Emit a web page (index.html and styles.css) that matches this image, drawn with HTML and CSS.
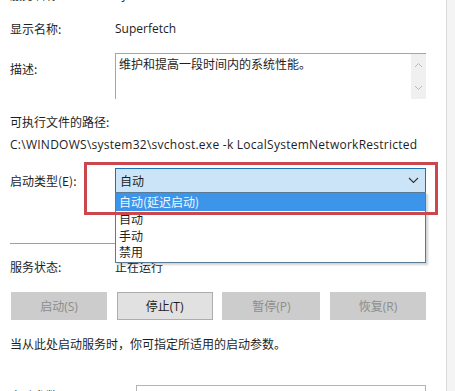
FILE: index.html
```html
<!DOCTYPE html>
<html lang="zh-CN">

<head>
    <meta charset="UTF-8">
    <title>Superfetch 的属性</title>
    <link rel="stylesheet" href="styles.css">
</head>

<body>
    <div class="page">
        <div class="dlg">
            <div class="row first">
                <div class="lbl">服务名称:</div>
                <div class="val">SysMain</div>
            </div>
            <div class="row name">
                <div class="lbl">显示名称:</div>
                <div class="val">Superfetch</div>
            </div>
            <div class="row desc">
                <div class="lbl top">描述:</div>
                <div class="descbox">
                    <div class="desctext">维护和提高一段时间内的系统性能。</div>
                    <div class="scroll">
                        <svg width="9" height="6" viewBox="0 0 9 6"><path d="M1 5 L4.5 1.5 L8 5" fill="none" stroke="#b8b8b8" stroke-width="1"/></svg>
                        <svg width="9" height="6" viewBox="0 0 9 6"><path d="M1 1 L4.5 4.5 L8 1" fill="none" stroke="#b8b8b8" stroke-width="1"/></svg>
                    </div>
                </div>
            </div>
            <div class="pathlbl">可执行文件的路径:</div>
            <div class="path">C:\WINDOWS\system32\svchost.exe -k LocalSystemNetworkRestricted</div>
            <div class="row type">
                <div class="lbl">启动类型(E):</div>
                <div class="combo">
                    <span>自动</span>
                    <svg width="11" height="7" viewBox="0 0 11 7"><path d="M1 1 L5.5 5.5 L10 1" fill="none" stroke="#333" stroke-width="1.1"/></svg>
                </div>
            </div>
            <div class="sep"></div>
            <div class="row status">
                <div class="lbl">服务状态:</div>
                <div class="val">正在运行</div>
            </div>
            <div class="btns">
                <div class="btn off">启动(S)</div>
                <div class="btn">停止(T)</div>
                <div class="btn off wide">暂停(P)</div>
                <div class="btn off">恢复(R)</div>
            </div>
            <div class="hint">当从此处启动服务时，你可指定所适用的启动参数。</div>
            <div class="row params">
                <div class="lbl">启动参数(M):</div>
                <div class="input"></div>
            </div>

            <!-- open dropdown + highlight drawn over the form -->
            <div class="list">
                <div class="item sel">自动(延迟启动)</div>
                <div class="item">自动</div>
                <div class="item">手动</div>
                <div class="item">禁用</div>
            </div>
            <div class="mark"></div>
        </div>
        <div class="edge"></div>
    </div>
</body>

</html>
```

FILE: styles.css
```css
* {
    margin: 0;
    padding: 0;
    box-sizing: border-box;
}

body {
    background-color: #ffffff;
    font-family: "Open Sans", "Noto Sans CJK SC", sans-serif;
    font-size: 12px;
    color: #1e1e1e;
    overflow: hidden;
}

.page {
    display: flex;
    height: 391px;
    overflow: hidden;
}

.dlg {
    position: relative;
    width: 447px;
    padding-left: 10px;
    border-right: 1px solid #dadada;
}

.edge {
    flex: 1;
    background-color: #f4f4f4;
}

.row {
    display: flex;
    align-items: center;
    height: 20px;
}

.lbl {
    width: 105px;
    font-family: "Noto Sans CJK SC", sans-serif;
    flex-shrink: 0;
}

.val {
    font-family: "Open Sans", "Noto Sans CJK SC", sans-serif;
}

.first {
    margin-top: -16px;
}

.name {
    margin-top: 14px;
}

.desc {
    margin-top: 15px;
    height: 46px;
    align-items: flex-start;
}

.lbl.top {
    padding-top: 7px;
}

.descbox {
    display: flex;
    width: 311px;
    height: 46px;
    border-top: 1px solid #a5a5a5;
    border-left: 1px solid #a5a5a5;
}

.desctext {
    flex: 1;
    padding: 2px 3px;
    font-family: "Noto Sans CJK SC", sans-serif;
    line-height: 16px;
}

.scroll {
    width: 15px;
    background-color: #f0f0f0;
    display: flex;
    flex-direction: column;
    justify-content: space-between;
    align-items: center;
    padding: 8px 0 8px 0;
}

.pathlbl {
    margin-top: 15px;
    line-height: 16px;
    font-family: "Noto Sans CJK SC", sans-serif;
}

.path {
    margin-top: 7px;
    line-height: 16px;
    white-space: nowrap;
    letter-spacing: 0.26px;
}

.type {
    margin-top: 15px;
    height: 25px;
}

.combo {
    display: flex;
    justify-content: space-between;
    align-items: center;
    width: 311px;
    height: 25px;
    background-color: #cce4f7;
    border: 1px solid #1f6fb4;
    padding: 0 6px 0 4px;
    font-family: "Noto Sans CJK SC", sans-serif;
}

.sep {
    margin-top: 50px;
    height: 1px;
    width: 416px;
    background-color: #a0a0a0;
}

.status {
    margin-top: 14px;
    height: 17px;
}

.btns {
    display: flex;
    justify-content: space-between;
    width: 416px;
    margin-top: 17px;
    padding-left: 1px;
}

.btn {
    width: 96px;
    height: 28px;
    display: flex;
    justify-content: center;
    align-items: center;
    background-color: #e1e1e1;
    border: 1px solid #adadad;
    font-family: "Open Sans", "Noto Sans CJK SC", sans-serif;
}

.btn.off {
    background-color: #cccccc;
    border-color: #cccccc;
    color: #8d8d8d;
}

.btn.wide {
    width: 98px;
}

.hint {
    margin-top: 16px;
    line-height: 16px;
    font-family: "Noto Sans CJK SC", sans-serif;
}

.params {
    margin-top: 33px;
    align-items: flex-start;
    height: 30px;
}

.params .lbl {
    width: 126px;
    padding-top: 2px;
}

.input {
    width: 290px;
    height: 24px;
    border: 1px solid #b4b4b4;
}

.list {
    position: absolute;
    left: 115px;
    top: 192px;
    width: 311px;
    height: 71px;
    background-color: #ffffff;
    border: 1px solid #5a7a96;
    box-shadow: 2px 2px 2px rgba(0, 0, 0, 0.18);
    font-family: "Noto Sans CJK SC", sans-serif;
}

.item {
    height: 16.5px;
    line-height: 16px;
    padding-left: 3px;
}

.item.sel {
    height: 18px;
    line-height: 18px;
    background-color: #3d95ea;
    color: #f4f8ff;
}

.mark {
    position: absolute;
    left: 84px;
    top: 162px;
    width: 354px;
    height: 53px;
    border: 3px solid #cc474d;
}
```
